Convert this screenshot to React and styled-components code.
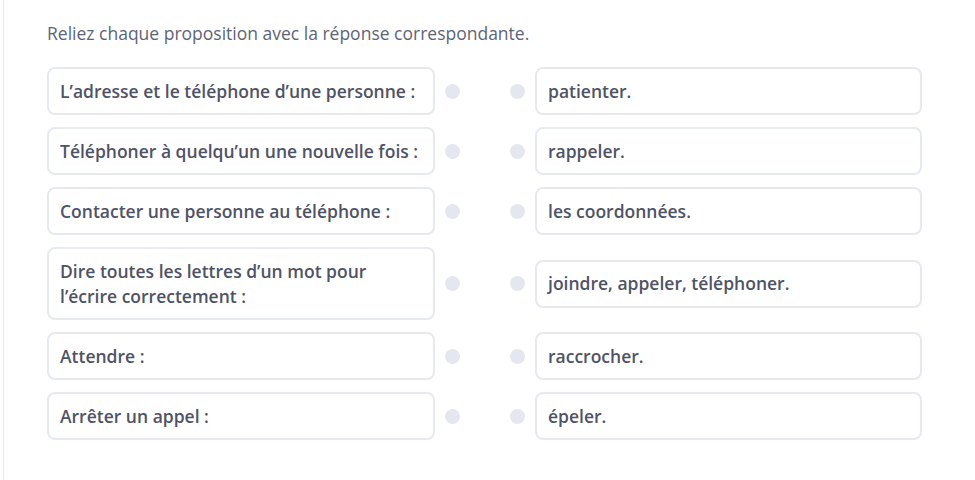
import React from 'react';
import styled, { createGlobalStyle } from 'styled-components';

const GlobalStyle = createGlobalStyle`
  html, body {
    margin: 0;
    padding: 0;
    background: #fff;
  }
  body {
    font-family: 'Open Sans', 'Noto Sans', sans-serif;
  }
`;

const Page = styled.div`
  margin-left: 3px;
  border-left: 1px solid #ececef;
  min-height: 480px;
  box-sizing: border-box;
  padding: 21px 0 0 43px;
`;

const Instruction = styled.p`
  margin: 0 0 22px;
  font-size: 17.5px;
  line-height: 24px;
  color: #5e6378;
`;

const List = styled.div`
  display: flex;
  flex-direction: column;
  gap: 12px;
  width: 875px;
`;

const Row = styled.div`
  display: grid;
  grid-template-columns: 388px 100px 387px;
  align-items: center;
`;

const Card = styled.div`
  box-sizing: border-box;
  min-height: 48px;
  padding: 9.5px 11px;
  border: 2px solid #e6e9f0;
  border-radius: 8px;
  background: #fff;
  font-size: 17.5px;
  font-weight: 600;
  line-height: 25px;
  color: #4f5366;
`;

const Connectors = styled.div`
  display: flex;
  justify-content: space-between;
  padding: 0 10px;
`;

const Dot = styled.span`
  width: 15px;
  height: 15px;
  border-radius: 50%;
  background: #e4e7ef;
`;

const pairs = [
  ['L’adresse et le téléphone d’une personne :', 'patienter.'],
  ['Téléphoner à quelqu’un une nouvelle fois :', 'rappeler.'],
  ['Contacter une personne au téléphone :', 'les coordonnées.'],
  ['Dire toutes les lettres d’un mot pour l’écrire correctement :', 'joindre, appeler, téléphoner.'],
  ['Attendre :', 'raccrocher.'],
  ['Arrêter un appel :', 'épeler.'],
];

export default function App() {
  return (
    <>
      <GlobalStyle />
      <Page>
        <Instruction>Reliez chaque proposition avec la réponse correspondante.</Instruction>
        <List>
          {pairs.map(([left, right]) => (
            <Row key={left}>
              <Card>{left}</Card>
              <Connectors>
                <Dot />
                <Dot />
              </Connectors>
              <Card>{right}</Card>
            </Row>
          ))}
        </List>
      </Page>
    </>
  );
}
